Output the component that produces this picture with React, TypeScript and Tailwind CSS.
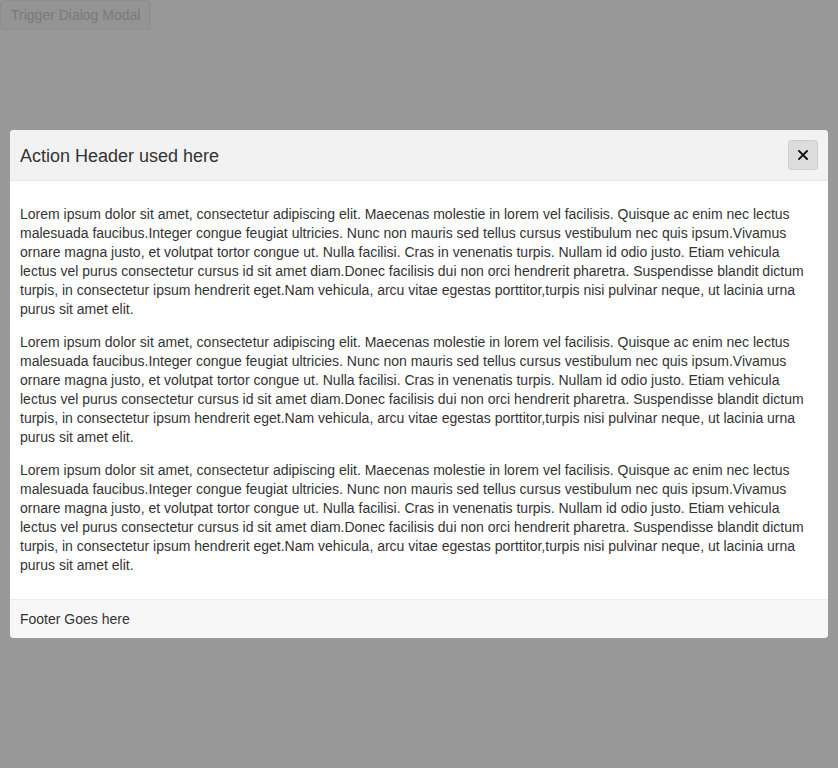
import React from "react";

const P =
  "Lorem ipsum dolor sit amet, consectetur adipiscing elit. Maecenas molestie in lorem vel facilisis. Quisque ac enim nec lectus malesuada faucibus.Integer congue feugiat ultricies. Nunc non mauris sed tellus cursus vestibulum nec quis ipsum.Vivamus ornare magna justo, et volutpat tortor congue ut. Nulla facilisi. Cras in venenatis turpis. Nullam id odio justo. Etiam vehicula lectus vel purus consectetur cursus id sit amet diam.Donec facilisis dui non orci hendrerit pharetra. Suspendisse blandit dictum turpis, in consectetur ipsum hendrerit eget.Nam vehicula, arcu vitae egestas porttitor,turpis nisi pulvinar neque, ut lacinia urna purus sit amet elit.";

export default function App() {
  return (
    <div className="relative min-h-[768px] bg-white font-['Liberation_Sans',Arial,sans-serif] text-[#333]">
      <button className="h-[30px] px-[10px] text-[14px] text-[#cbcbcb] bg-[#f7f7f7] border border-[#ececec] rounded-[3px]">
        Trigger Dialog Modal
      </button>
      <div className="fixed inset-0 bg-black/40 px-[10px] pt-[130px]">
        <div className="bg-white rounded-[4px] overflow-hidden">
          <div className="flex items-center justify-between bg-[#f2f2f2] border-b border-[#e5e5e5] p-[10px]">
            <h2 className="text-[18px] leading-[28px] pt-[2px] text-[#333]">Action Header used here</h2>
            <button className="w-[30px] h-[30px] flex items-center justify-center bg-[#dcdcdc] border border-[#cfcfcf] rounded-[3px]">
              <svg width="10" height="10" viewBox="0 0 10 10">
                <path d="M1 1 L9 9 M9 1 L1 9" stroke="#111" strokeWidth="1.9" strokeLinecap="square" />
              </svg>
            </button>
          </div>
          <div className="px-[10px] py-[10px] text-[14px] leading-[19px]">
            <p className="my-[14px]">{P}</p>
            <p className="my-[14px]">{P}</p>
            <p className="my-[14px]">{P}</p>
          </div>
          <div className="bg-[#f7f7f7] border-t border-[#ebebeb] px-[10px] py-[10px] text-[14px] leading-[18px]">
            Footer Goes here
          </div>
        </div>
      </div>
    </div>
  );
}
